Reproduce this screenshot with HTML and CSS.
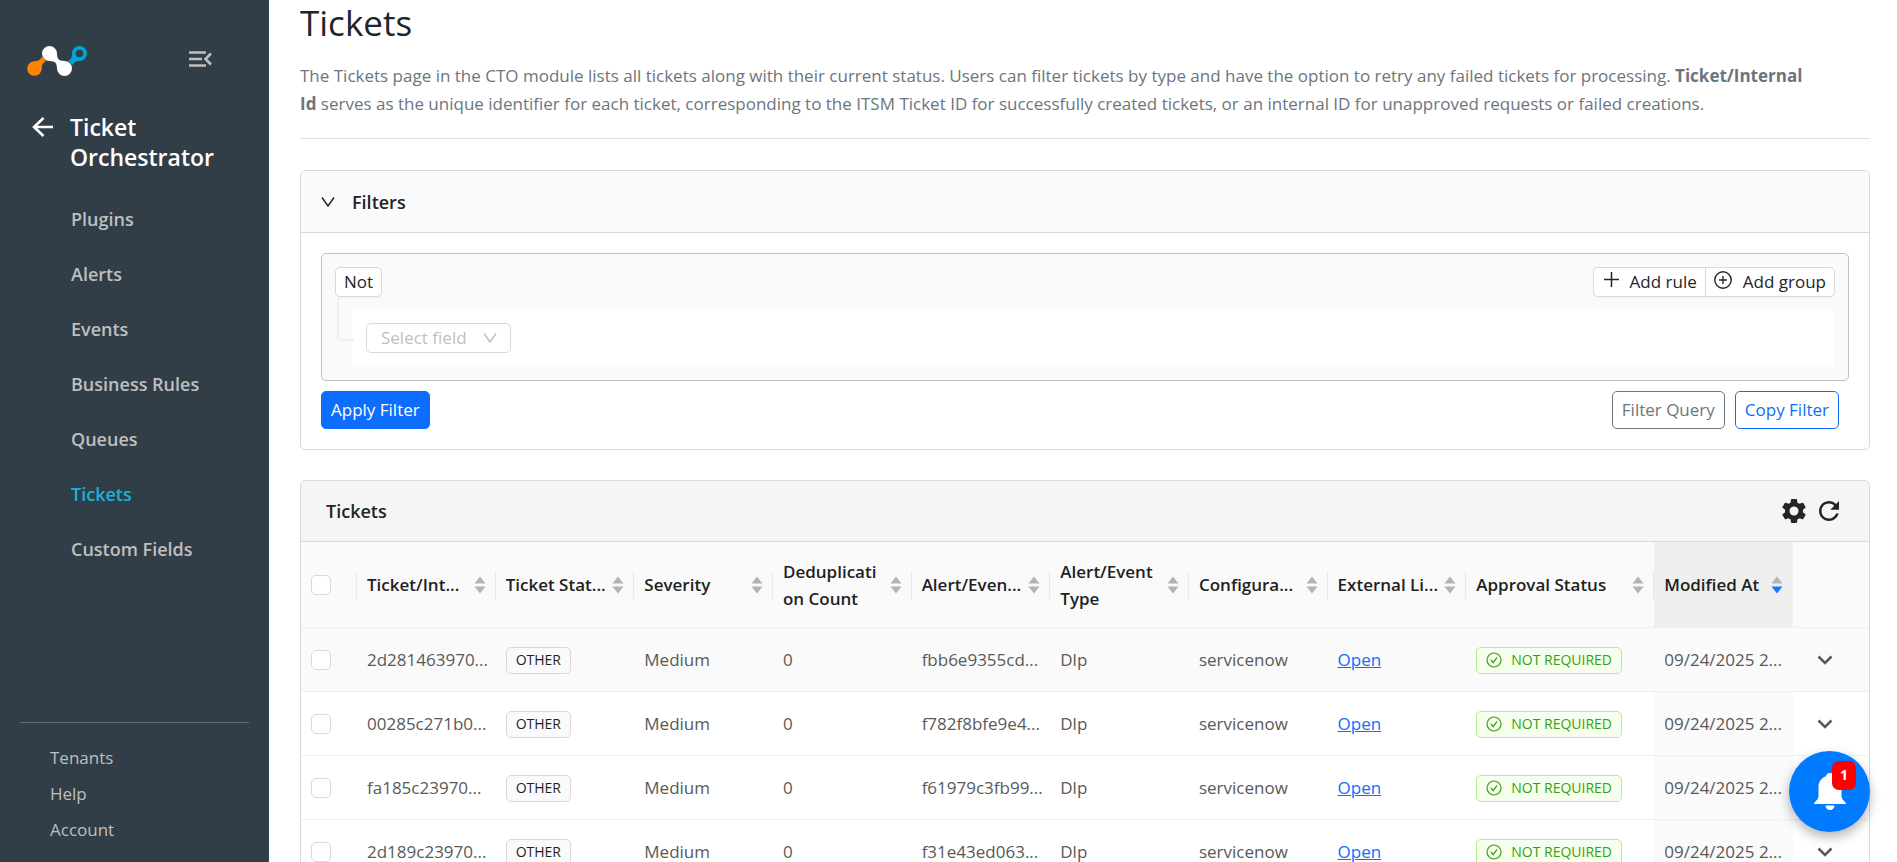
FILE: index.html
```html
<!DOCTYPE html>
<html lang="en">
<head>
    <meta charset="UTF-8">
    <meta name="viewport" content="width=device-width, initial-scale=1.0">
    <title>Tickets - Ticket Orchestrator</title>
    <link rel="stylesheet" href="styles.css">
</head>
<body>
    <!-- Shared icons -->
    <svg class="icon-defs" aria-hidden="true">
        <symbol id="sorter" viewBox="0 0 12 18">
            <path class="sort-up" d="M6 0.5L11.5 7.5H0.5z"/>
            <path class="sort-down" d="M6 17.5L11.5 10.5H0.5z"/>
        </symbol>
        <symbol id="check-circle" viewBox="0 0 16 16">
            <circle cx="8" cy="8" r="7" fill="none" stroke="currentColor" stroke-width="1.2"/>
            <path d="M5 8l2.2 2.6L11 5.4" fill="none" stroke="currentColor" stroke-width="1.3"/>
        </symbol>
        <symbol id="chevron" viewBox="0 0 16 10">
            <path d="M1.5 1.5L8 8l6.500-6.500" fill="none" stroke="currentColor" stroke-width="2.500"/>
        </symbol>
        <symbol id="thin-chevron" viewBox="0 0 14 12">
            <path d="M1 1.500L7 10l6-8.500" fill="none" stroke="currentColor" stroke-width="1.4"/>
        </symbol>
    </svg>

    <div class="layout">
        <aside class="sidebar">
            <div class="sidebar-top">
                <svg class="logo" viewBox="0 0 60 30" role="img" aria-label="Logo">
                    <path fill="#ff8300" d="M15 10.500l4 4.500c-4 2.500-4 4-4.200 7.800a7.300 7.300 0 1 1-8-7.500c4.500-.3 6-.8 8.200-4.800z"/>
                    <path fill="#00a5d3" fill-rule="evenodd" d="M52.500 0a7.500 7.500 0 1 1 0 15c-4 .2-5 .6-7.500 4.500l-4-4.500c3.500-2 3.800-3.500 4-7.500a7.500 7.500 0 0 1 7.500-7.500zm0 3.700a3.800 3.800 0 1 0 0 7.600 3.800 3.800 0 0 0 0-7.600z"/>
                    <path fill="#fff" d="M22.500 0a7.500 7.500 0 0 1 7.500 7.500c.2 5.500 1.500 7.300 7.500 7.500a7.500 7.500 0 1 1-7.500 7.500c-.2-5.500-1.500-7.300-7.500-7.500a7.500 7.500 0 0 1 0-15z"/>
                </svg>
                <button type="button" class="icon-btn" aria-label="Collapse menu">
                    <svg width="23" height="16" viewBox="0 0 23 16" fill="none" stroke="currentColor" stroke-width="2.600">
                        <path d="M0 1.500h17M0 8h13M0 14.500h17M22 2.500L16.500 8l5.500 5.500"/>
                    </svg>
                </button>
            </div>

            <div class="module">
                <a href="#" class="back" aria-label="Back">
                    <svg width="21" height="20" viewBox="0 0 21 20" fill="none" stroke="currentColor" stroke-width="2.600">
                        <path d="M21 10H2M11.500 1L2 10l9.500 9"/>
                    </svg>
                </a>
                <h2>Ticket Orchestrator</h2>
            </div>

            <nav class="menu">
                <a href="#">Plugins</a>
                <a href="#">Alerts</a>
                <a href="#">Events</a>
                <a href="#">Business Rules</a>
                <a href="#">Queues</a>
                <a href="#" class="active">Tickets</a>
                <a href="#">Custom Fields</a>
            </nav>

            <nav class="menu-bottom">
                <a href="#">Tenants</a>
                <a href="#">Help</a>
                <a href="#">Account</a>
            </nav>
        </aside>

        <main class="content">
            <h1>Tickets</h1>
            <p class="description">The Tickets page in the CTO module lists all tickets along with their current status. Users can filter tickets by type and have the option to retry any failed tickets for processing. <b>Ticket/Internal<br>Id</b> serves as the unique identifier for each ticket, corresponding to the ITSM Ticket ID for successfully created tickets, or an internal ID for unapproved requests or failed creations.</p>

            <section class="card filters">
                <button type="button" class="card-header filters-toggle" aria-expanded="true">
                    <svg width="14" height="12"><use href="#thin-chevron"/></svg>
                    Filters
                </button>
                <div class="filters-body">
                    <div class="query-group">
                        <div class="query-header">
                            <button type="button" class="small-btn">Not</button>
                            <div class="btn-group">
                                <button type="button" class="small-btn">
                                    <svg width="15" height="15" viewBox="0 0 15 15" stroke="currentColor" stroke-width="1.500"><path d="M7.500 0v15M0 7.500h15"/></svg>
                                    Add rule
                                </button>
                                <button type="button" class="small-btn">
                                    <svg width="18" height="18" viewBox="0 0 18 18" fill="none" stroke="currentColor" stroke-width="1.400"><circle cx="9" cy="9" r="8.200"/><path d="M9 5v8M5 9h8"/></svg>
                                    Add group
                                </button>
                            </div>
                        </div>
                        <div class="query-rule">
                            <div class="select-wrap">
                                <select aria-label="Select field">
                                    <option>Select field</option>
                                </select>
                                <svg width="14" height="12"><use href="#thin-chevron"/></svg>
                            </div>
                        </div>
                    </div>
                    <div class="filter-actions">
                        <button type="button" class="btn primary">Apply Filter</button>
                        <button type="button" class="btn secondary">Filter Query</button>
                        <button type="button" class="btn outline">Copy Filter</button>
                    </div>
                </div>
            </section>

            <section class="card">
                <div class="card-header tickets-header">
                    <h3>Tickets</h3>
                    <button type="button" class="icon-btn" aria-label="Settings">
                        <svg width="30" height="30" viewBox="0 0 24 24" fill="currentColor"><path d="M19.14 12.94c.04-.3.06-.61.06-.94 0-.32-.02-.64-.07-.94l2.030-1.580c.18-.14.23-.41.12-.61l-1.920-3.320c-.12-.22-.37-.29-.59-.22l-2.390.96c-.5-.38-1.030-.7-1.620-.94l-.36-2.540c-.04-.24-.24-.41-.48-.41h-3.840c-.24 0-.43.17-.47.41l-.36 2.540c-.59.24-1.130.57-1.620.94l-2.390-.96c-.22-.08-.47 0-.59.22L2.740 8.870c-.12.21-.08.47.12.61l2.030 1.580c-.05.3-.09.63-.09.94s.02.64.07.94l-2.030 1.580c-.18.14-.23.41-.12.61l1.920 3.320c.12.22.37.29.59.22l2.390-.96c.5.38 1.030.7 1.620.94l.36 2.540c.05.24.24.41.48.41h3.840c.24 0 .44-.17.47-.41l.36-2.540c.59-.24 1.130-.56 1.620-.94l2.390.96c.22.08.47 0 .59-.22l1.920-3.320c.12-.22.07-.47-.12-.61l-2.010-1.580zM12 15.600c-1.980 0-3.600-1.620-3.600-3.600s1.620-3.600 3.600-3.600 3.600 1.620 3.600 3.600-1.620 3.600-3.600 3.600z"/></svg>
                    </button>
                    <button type="button" class="icon-btn" aria-label="Refresh">
                        <svg width="30" height="30" viewBox="0 0 24 24" fill="currentColor"><path d="M17.650 6.350C16.200 4.900 14.210 4 12 4c-4.420 0-7.990 3.580-7.990 8s3.570 8 7.990 8c3.730 0 6.840-2.550 7.730-6h-2.080c-.82 2.330-3.040 4-5.650 4-3.310 0-6-2.690-6-6s2.690-6 6-6c1.660 0 3.140.69 4.220 1.780L13 11h7V4l-2.350 2.350z"/></svg>
                    </button>
                </div>

                <table>
                    <colgroup>
                        <col class="col-check">
                        <col><col><col><col><col><col><col><col>
                        <col class="col-approval">
                        <col>
                        <col class="col-expand">
                    </colgroup>
                    <thead>
                        <tr>
                            <th><input type="checkbox" aria-label="Select all"></th>
                            <th><div class="th-inner"><span>Ticket/Int...</span><svg><use href="#sorter"/></svg></div></th>
                            <th><div class="th-inner"><span>Ticket Stat...</span><svg><use href="#sorter"/></svg></div></th>
                            <th><div class="th-inner"><span>Severity</span><svg><use href="#sorter"/></svg></div></th>
                            <th><div class="th-inner"><span>Deduplicati<br>on Count</span><svg><use href="#sorter"/></svg></div></th>
                            <th><div class="th-inner"><span>Alert/Even...</span><svg><use href="#sorter"/></svg></div></th>
                            <th><div class="th-inner"><span>Alert/Event<br>Type</span><svg><use href="#sorter"/></svg></div></th>
                            <th><div class="th-inner"><span>Configura...</span><svg><use href="#sorter"/></svg></div></th>
                            <th><div class="th-inner"><span>External Li...</span><svg><use href="#sorter"/></svg></div></th>
                            <th><div class="th-inner"><span>Approval Status</span><svg><use href="#sorter"/></svg></div></th>
                            <th class="sorted"><div class="th-inner"><span>Modified At</span><svg><use href="#sorter"/></svg></div></th>
                            <th></th>
                        </tr>
                    </thead>
                    <tbody>
                        <tr class="hovered">
                            <td><input type="checkbox" aria-label="Select ticket"></td>
                            <td>2d281463970...</td>
                            <td><span class="tag">OTHER</span></td>
                            <td>Medium</td>
                            <td>0</td>
                            <td>fbb6e9355cd...</td>
                            <td>Dlp</td>
                            <td>servicenow</td>
                            <td><a href="#">Open</a></td>
                            <td><span class="tag green"><svg><use href="#check-circle"/></svg>NOT REQUIRED</span></td>
                            <td class="sorted">09/24/2025 2...</td>
                            <td><button type="button" class="icon-btn expand" aria-label="Expand row"><svg><use href="#chevron"/></svg></button></td>
                        </tr>
                        <tr>
                            <td><input type="checkbox" aria-label="Select ticket"></td>
                            <td>00285c271b0...</td>
                            <td><span class="tag">OTHER</span></td>
                            <td>Medium</td>
                            <td>0</td>
                            <td>f782f8bfe9e4...</td>
                            <td>Dlp</td>
                            <td>servicenow</td>
                            <td><a href="#">Open</a></td>
                            <td><span class="tag green"><svg><use href="#check-circle"/></svg>NOT REQUIRED</span></td>
                            <td class="sorted">09/24/2025 2...</td>
                            <td><button type="button" class="icon-btn expand" aria-label="Expand row"><svg><use href="#chevron"/></svg></button></td>
                        </tr>
                        <tr>
                            <td><input type="checkbox" aria-label="Select ticket"></td>
                            <td>fa185c23970...</td>
                            <td><span class="tag">OTHER</span></td>
                            <td>Medium</td>
                            <td>0</td>
                            <td>f61979c3fb99...</td>
                            <td>Dlp</td>
                            <td>servicenow</td>
                            <td><a href="#">Open</a></td>
                            <td><span class="tag green"><svg><use href="#check-circle"/></svg>NOT REQUIRED</span></td>
                            <td class="sorted">09/24/2025 2...</td>
                            <td><button type="button" class="icon-btn expand" aria-label="Expand row"><svg><use href="#chevron"/></svg></button></td>
                        </tr>
                        <tr>
                            <td><input type="checkbox" aria-label="Select ticket"></td>
                            <td>2d189c23970...</td>
                            <td><span class="tag">OTHER</span></td>
                            <td>Medium</td>
                            <td>0</td>
                            <td>f31e43ed063...</td>
                            <td>Dlp</td>
                            <td>servicenow</td>
                            <td><a href="#">Open</a></td>
                            <td><span class="tag green"><svg><use href="#check-circle"/></svg>NOT REQUIRED</span></td>
                            <td class="sorted">09/24/2025 2...</td>
                            <td><button type="button" class="icon-btn expand" aria-label="Expand row"><svg><use href="#chevron"/></svg></button></td>
                        </tr>
                    </tbody>
                </table>
            </section>
        </main>
    </div>

    <button type="button" class="bell" aria-label="Notifications">
        <svg width="32" height="38" viewBox="0 0 32 38" fill="currentColor">
            <path d="M16 0a4 4 0 0 1 4 3.200C25 5 27.500 9 27.500 14v9c0 2.500 1.500 4 3 5.500.8.8 1.500 1.500 1.500 2.500H0c0-1 .7-1.700 1.500-2.500C3 27 4.500 25.500 4.500 23v-9C4.500 9 7 5 12 3.200A4 4 0 0 1 16 0z"/>
            <path d="M11.500 32.500h9c0 2.500-2 4.500-4.500 4.500s-4.500-2-4.500-4.500z"/>
        </svg>
        <span class="badge">1</span>
    </button>
</body>
</html>
```

FILE: styles.css
```css
* {
    box-sizing: border-box;
}
body {
    margin: 0;
    font-family: "Segoe UI", "Open Sans", sans-serif;
    font-size: 17px;
    line-height: 28px;
    color: #212529;
    background: #fff;
}
h1, h2, h3, p {
    margin: 0;
}
button, select {
    font: inherit;
    color: inherit;
    cursor: pointer;
}
a {
    color: #0d6efd;
}
.icon-defs {
    display: none;
}
.icon-btn {
    display: flex;
    padding: 0;
    border: 0;
    background: none;
}
.layout {
    display: flex;
    height: 100vh;
    overflow: hidden;
}

/* Sidebar */
.sidebar {
    display: flex;
    flex-direction: column;
    flex: 0 0 269px;
    padding: 46px 20px 14px;
    background: #313e48;
    color: #bfbfbf;
}
.sidebar a {
    color: inherit;
    text-decoration: none;
}
.sidebar-top {
    display: flex;
    justify-content: space-between;
    align-items: flex-start;
    padding: 0 37px 0 7px;
}
.sidebar-top .icon-btn {
    padding-top: 5px;
}
.logo {
    width: 60px;
    height: 30px;
}
.module {
    display: flex;
    align-items: flex-start;
    gap: 17px;
    margin-top: 36px;
    padding-left: 12px;
    color: #fff;
}
.module h2 {
    font-size: 23px;
    font-weight: 600;
    line-height: 30px;
}
.back svg {
    display: block;
    margin-top: 5px;
}
.menu {
    display: flex;
    flex-direction: column;
    margin-top: 20px;
    padding-left: 51px;
    font-size: 18px;
    font-weight: 600;
    line-height: 55px;
}
.sidebar .active {
    color: #17b3da;
}
.menu-bottom {
    display: flex;
    flex-direction: column;
    margin-top: auto;
    padding: 17px 30px 0;
    border-top: 1px solid #626c74;
    line-height: 36px;
}

/* Content */
.content {
    flex: 1;
    min-width: 0;
    padding: 0 27px 0 31px;
}
h1 {
    font-size: 35px;
    font-weight: 400;
    line-height: 46px;
}
.description {
    margin: 16px 0 31px;
    padding-bottom: 20px;
    border-bottom: 1px solid #dee0e2;
    color: #6c757d;
}
.card {
    border: 1px solid #d9d9d9;
    border-radius: 5px;
    overflow: hidden;
}
.card-header {
    display: flex;
    align-items: center;
    width: 100%;
    height: 62px;
    border: 0;
    border-bottom: 1px solid #d9d9d9;
    font-size: 18px;
    font-weight: 600;
}
.filters {
    margin-bottom: 30px;
}
.filters-toggle {
    gap: 17px;
    padding: 0 20px;
    background: #fafafa;
}
.filters-body {
    padding: 20px;
}
.query-group {
    padding: 13px;
    border: 1px solid #bfbfbf;
    border-radius: 5px;
    background: #fafafa;
}
.query-header {
    display: flex;
    justify-content: space-between;
}
.small-btn {
    display: flex;
    align-items: center;
    gap: 11px;
    height: 30px;
    padding: 0 8px;
    border: 1px solid #d9d9d9;
    border-radius: 5px;
    background: #fff;
    box-shadow: 0 2px 0 rgba(0, 0, 0, 0.02);
}
.btn-group {
    display: flex;
}
.btn-group svg {
    margin-bottom: 5px;
}
.btn-group .small-btn:first-child {
    padding-left: 10px;
    border-right: 0;
    border-radius: 5px 0 0 5px;
}
.btn-group .small-btn:last-child {
    border-radius: 0 5px 5px 0;
}
.query-rule {
    position: relative;
    margin: 12px 0 0 17px;
    padding: 14px;
    border-radius: 5px;
    background: #fff;
}
/* Line that ties the rule to its group */
.query-rule::before {
    content: "";
    position: absolute;
    top: -12px;
    left: -15px;
    width: 15px;
    height: 42px;
    border: solid #f0f0f0;
    border-width: 0 0 2px 2px;
    border-bottom-left-radius: 5px;
}
.select-wrap {
    display: flex;
    align-items: center;
    width: 145px;
    color: #bfbfbf;
}
.select-wrap select {
    appearance: none;
    width: 100%;
    height: 30px;
    padding: 0 14px;
    border: 1px solid #d9d9d9;
    border-radius: 5px;
    background: #fff;
}
.select-wrap svg {
    margin-left: -28px;
    pointer-events: none;
}
.filter-actions {
    display: flex;
    gap: 10px;
    margin-top: 10px;
    padding-right: 10px;
}
.btn {
    height: 38px;
    padding: 0 9px;
    border: 1px solid;
    border-radius: 5px;
    background: #fff;
}
.primary {
    margin-right: auto;
    border-color: #0d6efd;
    background: #0d6efd;
    color: #fff;
}
.secondary {
    border-color: #6c757d;
    color: #6c757d;
}
.outline {
    color: #0d6efd;
}

/* Tickets table */
.tickets-header {
    gap: 5px;
    height: 61px;
    padding: 0 25px;
    background: #f5f5f5;
}
.tickets-header h3 {
    margin-right: auto;
    font: inherit;
}
table {
    width: 100%;
    table-layout: fixed;
    border-collapse: separate;
    border-spacing: 0;
}
.col-check {
    width: 56px;
}
.col-approval {
    width: 188px;
}
.col-expand {
    width: 76px;
}
th, td {
    padding: 0 10px;
    border-bottom: 1px solid #f0f0f0;
    text-align: left;
    white-space: nowrap;
}
th {
    position: relative;
    height: 86px;
    background: #fafafa;
    color: #1f1f1f;
    font-size: 17px;
    font-weight: 600;
    line-height: 27px;
}
th:not(:nth-last-child(-n+2))::after {
    content: "";
    position: absolute;
    top: 29px;
    right: 0;
    width: 1px;
    height: 28px;
    background: #e8e8e8;
}
td {
    height: 64px;
    color: #595959;
}
.hovered td {
    background: #fafafa;
}
td.sorted {
    background: #fafafa;
}
th.sorted {
    background: #efefef;
}
.th-inner {
    display: flex;
    justify-content: space-between;
    align-items: center;
}
.th-inner svg {
    --down: #b3b3b3;
    flex: none;
    width: 12px;
    height: 18px;
    fill: #b3b3b3;
}
th.sorted svg {
    --down: #1677ff;
}
.sort-down {
    fill: var(--down);
}
input[type="checkbox"] {
    display: block;
    appearance: none;
    width: 20px;
    height: 20px;
    margin: 0;
    border: 1px solid #d9d9d9;
    border-radius: 5px;
    background: #fff;
}
.tag {
    display: inline-flex;
    align-items: center;
    gap: 9px;
    height: 27px;
    padding: 0 9px;
    border: 1px solid #d9d9d9;
    border-radius: 5px;
    background: #fafafa;
    color: #1f1f1f;
    font-size: 14px;
    vertical-align: middle;
}
.green {
    border-color: #b7eb8f;
    background: #f6ffed;
    color: #389e0d;
}
.tag svg {
    width: 16px;
    height: 16px;
}
.expand {
    margin-left: 14px;
}
.expand svg {
    width: 16px;
    height: 10px;
}

/* Notification button */
.bell {
    position: fixed;
    right: 27px;
    bottom: 30px;
    display: flex;
    align-items: center;
    justify-content: center;
    width: 81px;
    height: 81px;
    padding: 0;
    border: 0;
    border-radius: 50%;
    background: #007bff;
    color: #fff;
    box-shadow: 0 5px 12px rgba(0, 0, 0, 0.3);
}
.badge {
    position: absolute;
    top: 10px;
    right: 14px;
    width: 24px;
    height: 29px;
    border-radius: 7px;
    background: #f00;
    font-size: 14px;
    font-weight: 700;
}
```
